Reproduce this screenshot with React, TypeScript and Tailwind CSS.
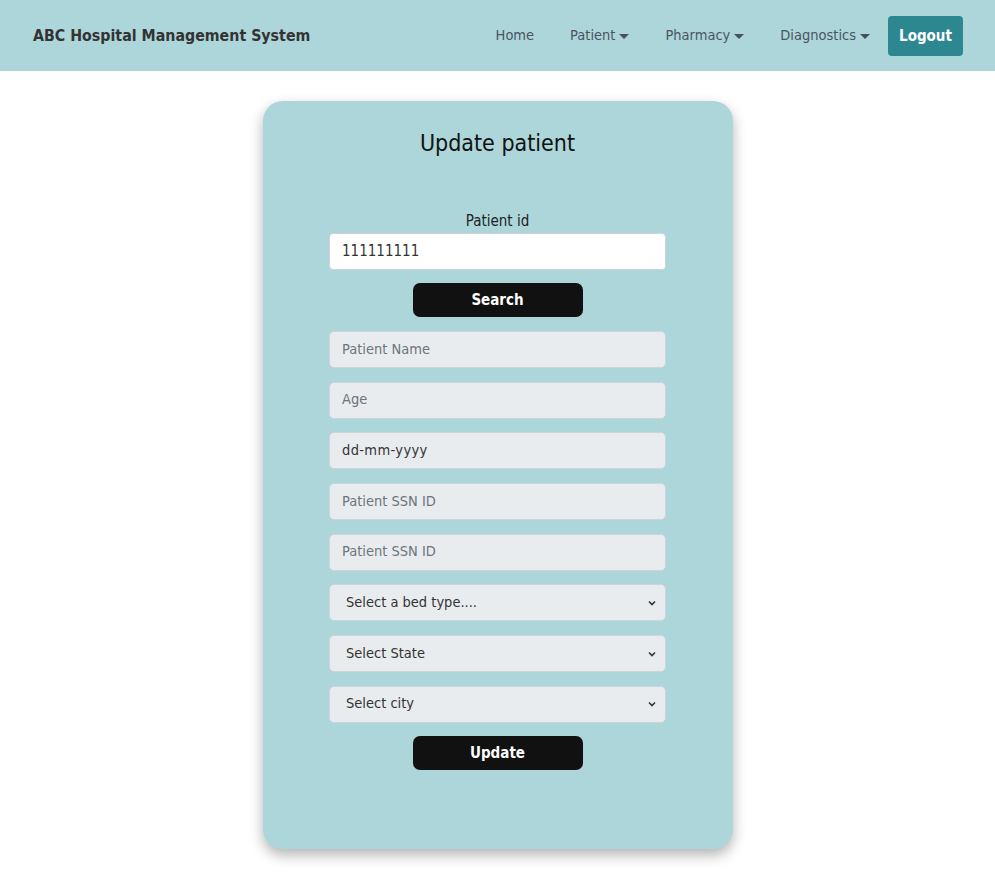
import React from 'react'

const font = "font-['Liberation_Sans_Narrow','DejaVu_Sans_Condensed',sans-serif]"

function Caret() {
    return <span className="inline-block ml-1 align-middle w-0 h-0 border-l-[5px] border-r-[5px] border-t-[5px] border-l-transparent border-r-transparent border-t-[#495057]"></span>
}

function Field({ placeholder, value }: { placeholder?: string; value?: string }) {
    return (
        <div className="w-[337px] h-[37px] rounded-[5px] bg-[#e9ecef] border border-[#ced4da] flex items-center px-3 text-[14.5px]">
            {value ? <span className="text-[#333] tracking-wide">{value}</span> : <span className="text-[#6c757d]">{placeholder}</span>}
        </div>
    )
}

function SelectField({ label }: { label: string }) {
    return (
        <div className="w-[337px] h-[37px] rounded-[5px] bg-[#e9ecef] border border-[#ced4da] flex items-center justify-between pl-4 pr-2 text-[14.5px] text-[#333]">
            <span>{label}</span>
            <svg width="10" height="10" viewBox="0 0 10 10"><path d="M2 3.5 L5 6.5 L8 3.5" stroke="#333" strokeWidth="1.6" fill="none" /></svg>
        </div>
    )
}

export default function App() {
    return (
        <div className={`min-h-[878px] bg-white ${font}`}>
            <nav className="h-[71px] bg-[#acd6da] flex items-center justify-between pl-[33px] pr-[32px]">
                <span className="text-[15.8px] font-bold text-[#333]">ABC Hospital Management System</span>
                <div className="flex items-center text-[14.5px] text-[#4a5560] pt-[1px]">
                    <span className="mr-[36px]">Home</span>
                    <span className="mr-[36px]">Patient<Caret /></span>
                    <span className="mr-[36px]">Pharmacy<Caret /></span>
                    <span className="mr-[18px]">Diagnostics<Caret /></span>
                    <button className="w-[75px] h-[40px] rounded-[4px] bg-[#2d8790] text-white font-bold text-[15px]">Logout</button>
                </div>
            </nav>
            <div className="flex justify-center pt-[30px]">
                <div className="w-[470px] h-[748px] rounded-[20px] bg-[#acd6da] shadow-[0_6px_14px_rgba(0,0,0,0.3)] flex flex-col items-center">
                    <h1 className="mt-[22px] text-[23px] leading-[40px] text-[#111]">Update patient</h1>
                    <label className="mt-[48px] text-[15px] leading-[20px] text-[#222]">Patient id</label>
                    <div className="mt-[2px] w-[337px] h-[37px] rounded-[4px] bg-white border border-[#ced4da] flex items-center px-3 text-[15px] text-[#333]">111111111</div>
                    <button className="mt-[13px] w-[170px] h-[34px] rounded-[7px] bg-[#111] text-white font-bold text-[15px]">Search</button>
                    <div className="mt-[14px] flex flex-col gap-[13.7px]">
                        <Field placeholder="Patient Name" />
                        <Field placeholder="Age" />
                        <Field value="dd-mm-yyyy" />
                        <Field placeholder="Patient SSN ID" />
                        <Field placeholder="Patient SSN ID" />
                        <SelectField label="Select a bed type...." />
                        <SelectField label="Select State" />
                        <SelectField label="Select city" />
                    </div>
                    <button className="mt-[13px] w-[170px] h-[34px] rounded-[7px] bg-[#111] text-white font-bold text-[15px]">Update</button>
                </div>
            </div>
        </div>
    )
}
